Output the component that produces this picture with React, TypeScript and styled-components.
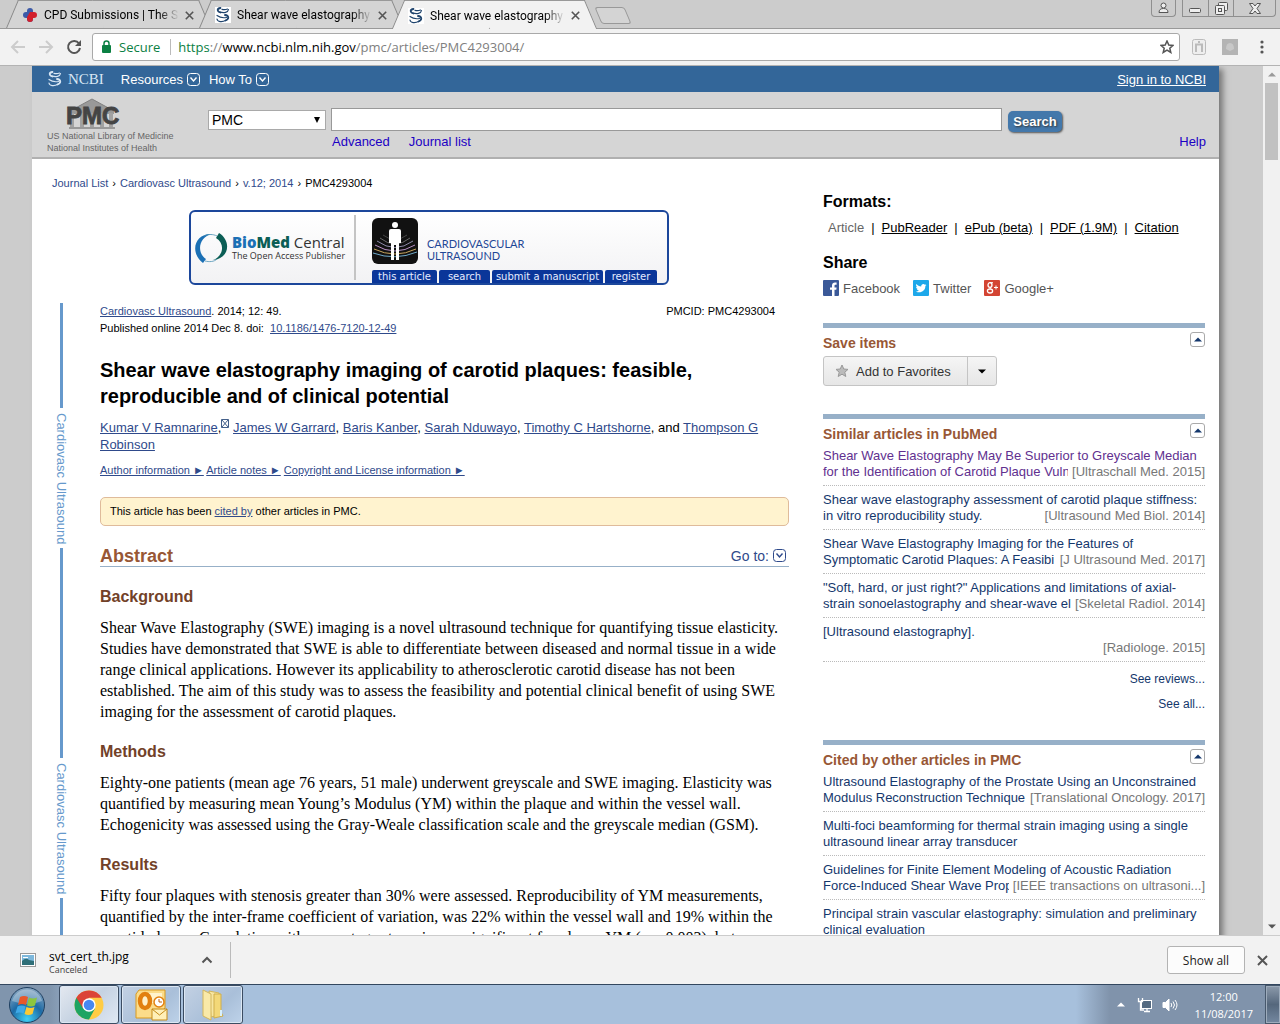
import React from 'react';
import styled, { createGlobalStyle } from 'styled-components';

const GlobalStyle = createGlobalStyle`
    * {
        box-sizing: border-box;
    }
    body {
        margin: 0;
        overflow: hidden;
        font-family: "Liberation Sans", Arial, sans-serif;
        font-size: 13px;
        color: #000;
    }
    h1, h2, h3, p, ul {
        margin: 0;
        padding: 0;
    }
    button, input, select {
        font-family: inherit;
        margin: 0;
        padding: 0;
    }
    svg {
        display: block;
        flex: none;
    }
`;

const uiFont = '"Open Sans", "Noto Sans", sans-serif';

const Screen = styled.div`
    display: flex;
    flex-direction: column;
    height: 100vh;
`;

const PlainButton = styled.button`
    display: flex;
    align-items: center;
    justify-content: center;
    border: 0;
    background: none;
    color: #5a5a5a;
`;

/* ---------- browser frame ---------- */

const TabStrip = styled.div`
    display: flex;
    height: 29px;
    flex: none;
    padding-left: 6px;
    background: #ccc;
    border-bottom: 1px solid #999;
    font-family: Roboto, sans-serif;
`;

const Tab = styled.div<{ $active?: boolean }>`
    position: relative;
    z-index: ${({ $active }) => ($active ? 1 : 0)};
    display: flex;
    align-items: center;
    width: 205px;
    height: ${({ $active }) => ($active ? '29px' : '28px')};
    margin-right: -12px;
    padding: 2px 17px 0 16px;
    gap: 6px;
    font-size: 12px;

    &::before, &::after {
        content: '';
        position: absolute;
        z-index: -1;
        top: 0;
        bottom: 0;
        background: ${({ $active }) => ($active ? '#f2f2f2' : '#d4d4d4')};
        border-top: 1px solid #999;
    }
    &::before {
        left: 6px;
        right: 50%;
        border-left: 1px solid #888;
        transform: skewX(-23deg);
    }
    &::after {
        left: 45%;
        right: 6px;
        border-right: 1px solid #888;
        transform: skewX(23deg);
    }
`;

const TabTitle = styled.span`
    flex: 1;
    line-height: 18px;
    white-space: nowrap;
    mask-image: linear-gradient(to right, #000 85%, transparent);
`;

const NewTab = styled.button`
    width: 30px;
    height: 17px;
    margin: 7px 0 0 13px;
    border: 1px solid #999;
    border-radius: 3px;
    background: #d4d4d4;
    transform: skewX(23deg);
`;

const WindowButtons = styled.div`
    display: flex;
    margin-left: auto;
    padding-right: 4px;
`;

const WindowButton = styled(PlainButton)<{ $width: number; $gap?: boolean }>`
    width: ${({ $width }) => $width}px;
    height: 17px;
    margin-right: ${({ $gap }) => ($gap ? 6 : -1)}px;
    border: 1px solid #8f8f8f;
    border-top: 0;
    border-radius: ${({ $gap }) => ($gap ? '0 0 4px 4px' : '0')};
    &:last-child {
        margin-right: 0;
        border-radius: 0 0 4px 0;
    }
`;

const Toolbar = styled.div`
    display: flex;
    align-items: center;
    flex: none;
    height: 37px;
    padding: 0 10px;
    gap: 16px;
    background: #f2f2f2;
    border-bottom: 1px solid #b3b3b3;
`;

const NavButtons = styled.div`
    display: flex;
    gap: 12px;
`;

const AddressBar = styled.div`
    display: flex;
    align-items: center;
    flex: 1;
    height: 28px;
    margin: 0 -4px 0 -6px;
    padding: 0 5px 0 7px;
    border: 1px solid #a9a9a9;
    border-radius: 3px;
    background: #fff;
    font-family: ${uiFont};
    font-size: 13px;
`;

const Secure = styled.span`
    margin-left: 7px;
    padding-right: 10px;
    border-right: 1px solid #bbb;
    line-height: 16px;
    color: #0b8043;
`;

const Url = styled.span<{ $tone?: string }>`
    color: ${({ $tone }) => $tone || '#808080'};
`;

const UrlText = styled.div`
    flex: 1;
    padding-left: 7px;
`;

/* ---------- page ---------- */

const Viewport = styled.div`
    display: flex;
    flex: 1;
    min-height: 0;
    overflow: hidden;
    background: #ccc;
`;

const Scrollbar = styled.div`
    display: flex;
    flex-direction: column;
    align-items: center;
    width: 17px;
    padding: 6px 0;
    background: #f1f1f1;
`;

const Thumb = styled.div`
    width: 13px;
    height: 77px;
    margin: 6px 0 auto;
    background: #c1c1c1;
`;

const Page = styled.div`
    flex: 1;
    min-width: 0;
    margin: 0 44px 0 32px;
    height: max-content;
    min-height: 100%;
    background: #fff;
    box-shadow: 5px 2px 6px -1px #777;
`;

const NcbiBar = styled.div`
    display: flex;
    align-items: center;
    height: 26px;
    padding: 0 13px 0 15px;
    background: #369;
    color: #fff;
`;

const NcbiLogo = styled.a`
    display: flex;
    align-items: center;
    gap: 5px;
    margin-right: 17px;
    color: #d8e6f4;
    font: 15px "Liberation Serif", "Times New Roman", serif;
    text-decoration: none;
`;

const MenuButton = styled(PlainButton)`
    gap: 4px;
    margin-right: 9px;
    color: #fff;
    font-size: 13px;
`;

const SignIn = styled.a`
    margin-left: auto;
    color: #fff;
`;

const SearchHeader = styled.header`
    display: flex;
    height: 67px;
    padding: 0 13px 0 15px;
    background: #d5d5d5;
    border-bottom: 2px solid #b0b0b0;
`;

const PmcBrand = styled.div`
    width: 161px;
    padding-top: 6px;
    font-size: 9px;
    line-height: 12px;
    color: #666;
    white-space: nowrap;
    svg {
        margin-left: 18px;
    }
`;

const SearchForm = styled.form`
    flex: 1;
    padding-top: 16px;
`;

const SearchRow = styled.div`
    display: flex;
    align-items: center;
    height: 23px;
    padding-right: 144px;
`;

const SelectWrap = styled.div`
    display: grid;
    align-items: center;
    width: 118px;
    margin-right: 5px;
    > * {
        grid-area: 1 / 1;
    }
    svg {
        justify-self: end;
        margin-right: 6px;
        pointer-events: none;
    }
`;

const Select = styled.select`
    width: 100%;
    height: 20px;
    padding-left: 3px;
    appearance: none;
    border: 1px solid #a9a9a9;
    border-radius: 0;
    background: #fff;
    font-size: 14px;
    line-height: 18px;
    color: #000;
`;

const SearchInput = styled.input`
    flex: 1;
    min-width: 0;
    height: 23px;
    border: 1px solid #999;
    background: #fff;
`;

const SearchButton = styled.button`
    width: 54px;
    height: 21px;
    margin: 3px 0 0 6px;
    border: 0;
    border-radius: 5px;
    background: #4378ab;
    box-shadow: 1px 1px 2px #555;
    color: #fff;
    font-size: 13px;
    font-weight: bold;
    text-shadow: 1px 1px 2px #333;
`;

const SearchLinks = styled.div`
    display: flex;
    gap: 19px;
    margin-top: 3px;
    padding-left: 124px;
    line-height: 16px;
    a {
        color: #1b00c4;
        text-decoration: none;
    }
    a:last-child {
        margin-left: auto;
    }
`;

const Columns = styled.div`
    display: grid;
    grid-template-columns: minmax(0, 1fr) 382px;
    gap: 34px;
    padding: 16px 14px 0 20px;
`;

const Breadcrumb = styled.nav`
    display: flex;
    gap: 4px;
    font-size: 11px;
    line-height: 17px;
    a {
        color: #2f4a8b;
        text-decoration: none;
    }
`;

const BannerRow = styled.div`
    display: flex;
    justify-content: center;
    margin: 18px 0;
    padding-left: 17px;
`;

const Banner = styled.div`
    display: grid;
    grid-template: 100% / 165px 1fr;
    width: 480px;
    height: 75px;
    border: 2px solid #1c479b;
    border-radius: 6px;
    background: linear-gradient(#fff, #f2f2f4);
`;

const Publisher = styled.div`
    display: flex;
    align-items: center;
    gap: 4px;
    margin: 3px 0;
    padding-left: 4px;
    border-right: 2px solid #c4c4c4;
    font-family: "Open Sans", sans-serif;
    font-size: 9px;
    line-height: 11px;
    color: #333;
    white-space: nowrap;
`;

const PublisherName = styled.div`
    font-size: 15px;
    line-height: 16px;
    b {
        font-weight: 800;
        color: #1b70b5;
    }
    b + b {
        color: #0b5e55;
    }
`;

const JournalName = styled.div`
    display: flex;
    align-items: flex-end;
    gap: 9px;
    height: 52px;
    padding-left: 16px;
    font-family: Lato, sans-serif;
    font-size: 11px;
    line-height: 12px;
    color: #1f4796;
    div {
        padding-bottom: 2px;
    }
`;

const JournalSide = styled.div`
    display: flex;
    flex-direction: column;
    justify-content: space-between;
`;

const BannerTabs = styled.div`
    display: grid;
    grid-template-columns: 65px 51px 111px 52px;
    gap: 2px;
    margin-left: 16px;
    a {
        border-radius: 2px 2px 0 0;
        background: #0a3699;
        color: #e6ecff;
        font: 10px/13px "DejaVu Sans", sans-serif;
        text-align: center;
        text-decoration: none;
        white-space: nowrap;
    }
`;

const Article = styled.article`
    display: grid;
    grid-template-columns: 48px minmax(0, 1fr);
`;

const Rail = styled.div`
    display: flex;
    flex-direction: column;
    align-items: center;
    width: 19px;
    color: #6699cc;
`;

const RailLine = styled.div<{ $length?: number }>`
    width: 3px;
    height: ${({ $length }) => $length || 300}px;
    background: #6699cc;
`;

const RailText = styled.div`
    height: 140px;
    padding: 5px 0;
    line-height: 17px;
    writing-mode: vertical-rl;
    white-space: nowrap;
`;

const CitationRow = styled.div`
    display: flex;
    justify-content: space-between;
    padding-right: 14px;
    font-size: 11px;
    line-height: 17px;
`;

const TextLink = styled.a`
    color: #2f4a8b;
`;

const Title = styled.h1`
    margin-top: 20px;
    font-size: 20px;
    line-height: 26px;
`;

const Authors = styled.div`
    margin-top: 10px;
    line-height: 17px;
    sup {
        display: inline-block;
        line-height: 0;
        vertical-align: 4px;
    }
`;

const InfoLinks = styled.div`
    margin-top: 9px;
    font-size: 11px;
    line-height: 17px;
`;

const CitedNote = styled.div`
    margin-top: 18px;
    padding: 0 9px;
    border: 1px solid #dfbb9b;
    border-radius: 5px;
    background: #fff3cf;
    font-size: 11px;
    line-height: 27px;
`;

const SectionHead = styled.div`
    display: flex;
    justify-content: space-between;
    align-items: center;
    margin-top: 19px;
    height: 22px;
    border-bottom: 1px solid #97b0c8;
    h2 {
        font-size: 18px;
        line-height: 22px;
        color: #985735;
    }
`;

const GoTo = styled(PlainButton)`
    gap: 4px;
    padding-right: 3px;
    color: #2f4a8b;
    font-size: 14px;
`;

const SubHeading = styled.h3`
    margin: 20px 0 10px;
    font-size: 16px;
    line-height: 20px;
    color: #724128;
`;

const Paragraph = styled.p`
    font-family: "Liberation Serif", "Times New Roman", serif;
    font-size: 16px;
    line-height: 21px;
`;

/* ---------- side column ---------- */

const Side = styled.aside`
    padding-top: 17px;
`;

const SideTitle = styled.h2`
    font-size: 16px;
    line-height: 20px;
`;

const Formats = styled.div`
    display: flex;
    margin: 8px 0 17px;
    padding-left: 5px;
    gap: 7px;
    line-height: 16px;
    a {
        color: #000;
    }
`;

const Muted = styled.span`
    color: #666;
`;

const ShareRow = styled.div`
    display: flex;
    gap: 13px;
    margin: 7px 0 27px;
    a {
        display: flex;
        gap: 4px;
        align-items: center;
        height: 16px;
        color: #555;
        font-size: 13px;
        text-decoration: none;
    }
`;

const Portlet = styled.section`
    margin-bottom: 23px;
    border-top: 5px solid #97b0c8;
`;

const PortletHead = styled.div`
    display: flex;
    justify-content: space-between;
    align-items: flex-start;
    height: 28px;
    padding-top: 4px;
    h3 {
        padding-top: 2px;
        font-size: 14px;
        line-height: 18px;
        color: #985735;
    }
`;

const Toggle = styled(PlainButton)`
    width: 15px;
    height: 15px;
    border: 1px solid #aaa;
    border-radius: 3px;
`;

const Favorites = styled.div`
    display: flex;
    width: max-content;
    height: 30px;
    margin-bottom: 28px;
    border: 1px solid #c4c4c4;
    border-radius: 3px;
    background: linear-gradient(#f5f5f5, #e6e6e6);
`;

const FavoritesButton = styled(PlainButton)`
    gap: 7px;
    padding: 0 16px 0 11px;
    color: #333;
    font-size: 13px;
`;

const FavoritesMore = styled(PlainButton)`
    width: 29px;
    border-left: 1px solid #c4c4c4;
`;

const ArticleList = styled.ul`
    list-style: none;
`;

const ArticleItem = styled.li<{ $visited?: boolean }>`
    display: grid;
    height: 39px;
    margin-bottom: 5px;
    padding-top: 1px;
    border-bottom: 1px dotted #bbb;
    line-height: 16px;
    > * {
        grid-area: 1 / 1;
    }
    a {
        color: ${({ $visited }) => ($visited ? '#61308f' : '#14376c')};
        text-decoration: none;
    }
`;

const Source = styled.span`
    align-self: start;
    justify-self: end;
    margin-top: 16px;
    padding-left: 4px;
    background: #fff;
    color: #777;
`;

const MoreLink = styled.a`
    display: block;
    color: #14376c;
    font-size: 12px;
    line-height: 25px;
    text-align: right;
    text-decoration: none;
`;

/* ---------- downloads and taskbar ---------- */

const DownloadBar = styled.div`
    display: flex;
    align-items: center;
    flex: none;
    height: 49px;
    padding: 0 12px 0 20px;
    background: #f2f2f2;
    border-top: 1px solid #ccc;
    font-family: ${uiFont};
`;

const DownloadItem = styled.div`
    display: flex;
    align-items: center;
    width: 211px;
    height: 36px;
    padding-right: 17px;
    border-right: 1px solid #bbb;
`;

const FileName = styled.div`
    flex: 1;
    margin-left: 13px;
    padding-top: 4px;
    font-size: 12px;
    line-height: 15px;
    small {
        display: block;
        font-size: 9px;
        line-height: 11px;
        color: #444;
    }
`;

const ShowAll = styled.button`
    width: 78px;
    height: 28px;
    margin: 0 12px 0 auto;
    border: 1px solid #b3b3b3;
    border-radius: 3px;
    background: #fcfcfc;
    font-size: 12px;
    color: #222;
`;

const Taskbar = styled.div`
    display: flex;
    flex: none;
    height: 40px;
    border-top: 1px solid #33475f;
    background: linear-gradient(to right, #8095ad 0, #8095ad 50px, #a7c0dc 90px, #a7c0dc calc(100% - 204px), #8093ab calc(100% - 170px));
    font-family: ${uiFont};
    font-size: 11px;
    color: #fff;
`;

const StartButton = styled(PlainButton)`
    width: 54px;
    margin-right: 5px;
`;

const TaskButton = styled(PlainButton)<{ $lit?: boolean }>`
    width: 60px;
    margin-right: 2px;
    border: 1px solid #3b4c62;
    border-radius: 3px;
    box-shadow: inset 0 0 0 1px #dce7f3;
    background: ${({ $lit }) => ($lit ? 'linear-gradient(135deg, #e4e9f0, #c5d2e2 50%, #dfe8f3)' : 'linear-gradient(135deg, #c3d1e3, #a9bfd9 60%, #bed2e9)')};
`;

const Tray = styled.div`
    display: flex;
    align-items: center;
    gap: 9px;
    margin-left: auto;
    padding-right: 12px;
    > svg:first-child {
        margin-right: 3px;
    }
`;

const Clock = styled.div`
    margin-left: 8px;
    text-align: center;
    line-height: 17px;
`;

const ShowDesktop = styled.button`
    width: 15px;
    border: 1px solid #47586c;
    border-right: 0;
    background: linear-gradient(#8c9aab, #55677c 50%, #7488a0);
    box-shadow: inset 0 0 0 1px #9eacbc;
`;

/* ---------- icons ---------- */

const NcbiIcon = ({ dark }: { dark?: boolean }) => (
    <svg width="16" height="16" viewBox="0 0 16 16" fill="none" stroke={dark ? '#20456e' : '#d8e6f4'} strokeLinecap="round">
        {dark && <rect width="16" height="16" fill="#fff" stroke="none" />}
        <path d="M5.500 1C1.500 1.500 2 4.500 5.500 5.500" strokeWidth="1.800" />
        <path d="M5 5.200c4 1 8 .5 8.500-2.700M7 2.300q3 .6 5.500-.3" strokeWidth="1.200" />
        <path d="M10 8c4 .5 4.500 4 .5 5.500" strokeWidth="1.800" />
        <path d="M2 8.500q4 3 9.500 2M2 12c.5 3 5 3.500 9 1.300" strokeWidth="1.200" />
    </svg>
);

const CloseIcon = ({ size = 9 }: { size?: number }) => (
    <svg width={size} height={size} viewBox="0 0 9 9" stroke="#555" strokeWidth="1.600">
        <path d="M.8.8l7.400 7.400M8.200.8L.8 8.200" />
    </svg>
);

const BoxedChevron = () => (
    <svg width="13" height="13" viewBox="0 0 13 13" fill="none" stroke="currentColor">
        <rect x=".5" y=".5" width="12" height="12" rx="3" />
        <path d="M3.500 4.500l3 3.500 3-3.500" strokeWidth="1.400" />
    </svg>
);

const Triangle = ({ up, color = '#000', width = 8 }: { up?: boolean; color?: string; width?: number }) => (
    <svg width={width} height="5" viewBox="0 0 8 5" fill={color} preserveAspectRatio="none">
        <path d={up ? 'M0 4.500L4 .5l4 4z' : 'M0 .5h8l-4 4z'} />
    </svg>
);

const PmcLogo = () => (
    <svg width="56" height="32" viewBox="0 0 56 32">
        <path d="M5 13L27 1l22 12v3H5z" fill="#999" />
        <path d="M5 13L27 1l22 12" fill="none" stroke="#808080" />
        <path d="M7 15v15M17 15v15M27 15v15M37 15v15M46 15v15" stroke="#a2a2a2" strokeWidth="4" />
        <path d="M4 30h46" stroke="#999" strokeWidth="2" />
        <text x="1" y="26" fontFamily="Liberation Sans, Arial, sans-serif" fontSize="24" fontWeight="bold" fill="#444" stroke="#444" strokeWidth=".8">PMC</text>
    </svg>
);

const BodyIcon = () => (
    <svg width="46" height="46" viewBox="0 0 46 46" fill="none">
        <rect width="46" height="46" rx="6" fill="#111" />
        <g strokeWidth="1">
            <path d="M11 17q12 9 24 0" stroke="#444" />
            <path d="M8 20q15 12 30 0" stroke="#666" />
            <path d="M5 23q18 13 36 0" stroke="#8d8aa8" />
            <path d="M3 27q20 12 40 0" stroke="#b78fc4" />
            <path d="M2 31q21 10 42 0" stroke="#c9a55c" />
            <path d="M1 35q22 8 44-1" stroke="#6fa9c9" />
        </g>
        <circle cx="23" cy="7" r="3" fill="#fff" />
        <path d="M19 11h8q2 0 2 2v12h-2v17h-3V27h-2v15h-3V25h-2V13q0-2 2-2z" fill="#fff" />
    </svg>
);

const SwirlIcon = () => (
    <svg width="33" height="32" viewBox="0 0 33 32">
        <path d="M17 2C0 1-6 20 8 31l3-4C1 20 4 5 17 2z" fill="#1b70b5" />
        <path d="M24 1c13 8 10 26-6 27 11-4 12-17 3-22z" fill="#0b5e55" />
        <path d="M9 4c4-2 9-2 13 0M10 29c4 1 9 1 12-2" stroke="#4d93b5" fill="none" strokeWidth=".8" />
    </svg>
);

const FacebookIcon = () => (
    <svg width="16" height="16" viewBox="0 0 16 16">
        <rect width="16" height="16" rx="1" fill="#3b5998" />
        <path d="M9 16V9.800H7V7.400h2V5.500C9 3.500 10.200 2.500 12 2.500h1.600v2.200h-1c-.9 0-1.100.4-1.100 1.100v1.600h2.100l-.3 2.400h-1.800V16z" fill="#fff" />
    </svg>
);

const TwitterIcon = () => (
    <svg width="16" height="16" viewBox="0 0 16 16">
        <rect width="16" height="16" rx="1" fill="#1da8ea" />
        <path d="M13.500 4.900l-1.100.4.800-1.100-1.300.5C10.500 3.400 8 4.300 8.200 6.500 6.200 6.400 4.600 5.500 3.400 4.100c-.7 1.200-.2 2.300.7 2.900l-1-.2c0 1.100.7 1.900 1.700 2.200h-.9c.2.800 1 1.400 2 1.500-.9.700-2 1-3.100.9 4.300 2.400 9.500.1 9.600-5.300z" fill="#fff" />
    </svg>
);

const GoogleIcon = () => (
    <svg width="16" height="16" viewBox="0 0 16 16" fill="none" stroke="#fff" strokeWidth="1.300">
        <rect width="16" height="16" rx="1" fill="#d34433" stroke="none" />
        <ellipse cx="6" cy="5" rx="2" ry="2.300" />
        <ellipse cx="6" cy="11" rx="2.600" ry="2" />
        <path d="M6 2.700h3M7 7.200q-2 1 0 2M10 7.500h4M12 5.500v4" strokeWidth="1" />
    </svg>
);

const StarIcon = ({ filled }: { filled?: boolean }) => (
    <svg width="14" height="14" viewBox="0 0 14 14" fill={filled ? '#bbb' : 'none'} stroke={filled ? '#999' : '#555'} strokeWidth={filled ? 1 : 1.5}>
        <path d="M7 1l1.800 4 4.200.4-3.200 2.800 1 4.300L7 10.200l-3.800 2.300 1-4.300L1 5.400 5.200 5z" />
    </svg>
);

const WindowsOrb = () => (
    <svg width="38" height="38" viewBox="0 0 38 38">
        <defs>
            <radialGradient id="orb" cx=".5" cy=".9" r=".9">
                <stop offset="0" stopColor="#3fd0f5" />
                <stop offset=".5" stopColor="#1d6ba6" />
                <stop offset="1" stopColor="#8ea9c2" />
            </radialGradient>
        </defs>
        <circle cx="19" cy="19" r="17.500" fill="url(#orb)" stroke="#1f3f60" />
        <path d="M4 15a15.500 15.500 0 0130 0q-14 6-30 0z" fill="#fff" opacity=".3" />
        <path d="M12 11q4-2 8 0l-2 8q-4-2-8 0z" fill="#e8582a" />
        <path d="M21 11.500q4 2 8 0l-2 8q-4 2-8 0z" fill="#8cc63f" />
        <path d="M9.500 20.500q4-2 8 0l-2 7q-4-2-8 0z" fill="#3fa9e8" />
        <path d="M18.500 21q4 2 8 0l-2 7q-4 2-8 0z" fill="#fcc934" />
    </svg>
);

const ChromeIcon = () => (
    <svg width="30" height="30" viewBox="0 0 30 30">
        <circle cx="15" cy="15" r="14.500" fill="#fc4" />
        <path d="M15 15L2.400 7.800A14.500 14.500 0 0015 29.500l6-11z" fill="#1da462" />
        <path d="M2.400 7.800a14.500 14.500 0 0125.200 0H15l-6 10.500z" fill="#db4437" />
        <circle cx="15" cy="15" r="6.700" fill="#fff" />
        <circle cx="15" cy="15" r="5.300" fill="#4688f1" />
    </svg>
);

const OutlookIcon = () => (
    <svg width="34" height="34" viewBox="0 0 34 34">
        <path d="M5 2h26v18L20 30H2V6z" fill="#fbdc8a" stroke="#d99a1e" />
        <rect x="15" y="5" width="13" height="10" fill="#fff3cc" />
        <ellipse cx="11" cy="13" rx="5" ry="7" fill="#fff0c8" stroke="#e2800f" strokeWidth="4.500" />
        <circle cx="25" cy="14" r="5" fill="#fff" stroke="#e2800f" strokeWidth="1.500" />
        <path d="M25 11v3h3" fill="none" stroke="#c0600a" />
        <path d="M18 21h15v11H18z" fill="#fff0b8" stroke="#c48a18" />
        <path d="M18 21l7.500 6 7.500-6" fill="none" stroke="#c48a18" />
    </svg>
);

const FolderIcon = () => (
    <svg width="26" height="32" viewBox="0 0 26 32">
        <path d="M9 2l10 2v22l-8 2z" fill="#f7e6a0" stroke="#d4b65a" />
        <path d="M14 5h7v18l2 4-9 2z" fill="#f3d878" stroke="#cfae4c" />
        <path d="M3 1l8 4v26l-8-4z" fill="#f9e9a8" stroke="#d4b65a" />
        <path d="M20 21h2v6h-2z" fill="#d9f0fb" />
    </svg>
);

const similar = [
    { title: 'Shear Wave Elastography May Be Superior to Greyscale Median for the Identification of Carotid Plaque Vuln', source: '[Ultraschall Med. 2015]', visited: true },
    { title: 'Shear wave elastography assessment of carotid plaque stiffness: in vitro reproducibility study.', source: '[Ultrasound Med Biol. 2014]' },
    { title: 'Shear Wave Elastography Imaging for the Features of Symptomatic Carotid Plaques: A Feasibi', source: '[J Ultrasound Med. 2017]' },
    { title: '"Soft, hard, or just right?" Applications and limitations of axial-strain sonoelastography and shear-wave el', source: '[Skeletal Radiol. 2014]' },
    { title: '[Ultrasound elastography].', source: '[Radiologe. 2015]' },
];

const citedBy = [
    { title: 'Ultrasound Elastography of the Prostate Using an Unconstrained Modulus Reconstruction Technique', source: '[Translational Oncology. 2017]' },
    { title: 'Multi-foci beamforming for thermal strain imaging using a single ultrasound linear array transducer' },
    { title: 'Guidelines for Finite Element Modeling of Acoustic Radiation Force-Induced Shear Wave Prop', source: '[IEEE transactions on ultrasoni...]' },
    { title: 'Principal strain vascular elastography: simulation and preliminary clinical evaluation' },
];

const authors = ['James W Garrard', 'Baris Kanber', 'Sarah Nduwayo', 'Timothy C Hartshorne'];

const SidePortlet = ({ title, children }: any) => (
    <Portlet>
        <PortletHead>
            <h3>{title}</h3>
            <Toggle aria-label={`Collapse ${title}`}><Triangle up color="#14376c" /></Toggle>
        </PortletHead>
        {children}
    </Portlet>
);

const Articles = ({ items }: any) => (
    <ArticleList>
        {items.map((item: any) => (
            <ArticleItem key={item.title} $visited={item.visited}>
                <a href="#article">{item.title}</a>
                {item.source && <Source>{item.source}</Source>}
            </ArticleItem>
        ))}
    </ArticleList>
);

const BrowserTop = () => (
    <>
        <TabStrip>
            <Tab>
                <svg width="16" height="16" viewBox="0 0 16 16">
                    <path d="M5 4a3 3 0 016 0v8a3 3 0 01-6 0z" fill="#3c5aa8" />
                    <path d="M4 5h4v6H4a3 3 0 010-6z" fill="#3c5aa8" />
                    <path d="M8 5h4a3 3 0 010 6h-1v1a3 3 0 01-6 0v-2z" fill="#d2202c" />
                </svg>
                <TabTitle>CPD Submissions | The S</TabTitle>
                <PlainButton aria-label="Close tab"><CloseIcon /></PlainButton>
            </Tab>
            <Tab>
                <NcbiIcon dark />
                <TabTitle>Shear wave elastography</TabTitle>
                <PlainButton aria-label="Close tab"><CloseIcon /></PlainButton>
            </Tab>
            <Tab $active>
                <NcbiIcon dark />
                <TabTitle>Shear wave elastography</TabTitle>
                <PlainButton aria-label="Close tab"><CloseIcon /></PlainButton>
            </Tab>
            <NewTab aria-label="New tab" />
            <WindowButtons>
                <WindowButton $width={25} $gap aria-label="Profile">
                    <svg width="11" height="12" viewBox="0 0 11 12" fill="#eee" stroke="#555"><circle cx="5.500" cy="3.500" r="2.500" /><path d="M1 10.500q0-4 4.500-4t4.500 4z" /></svg>
                </WindowButton>
                <WindowButton $width={27} aria-label="Minimize">
                    <svg width="13" height="12" viewBox="0 0 13 12"><rect x=".5" y="6.500" width="11" height="4" rx="1" fill="#eee" stroke="#555" /></svg>
                </WindowButton>
                <WindowButton $width={26} aria-label="Restore">
                    <svg width="13" height="13" viewBox="0 0 13 13" fill="#eee" stroke="#555"><rect x="3.500" y=".5" width="9" height="8" rx="1" /><rect x=".5" y="3.500" width="9" height="9" rx="1" /><rect x="3.500" y="6.500" width="3" height="3" /></svg>
                </WindowButton>
                <WindowButton $width={43} aria-label="Close">
                    <svg width="12" height="11" viewBox="0 0 12 11" fill="#eee" stroke="#555"><path d="M.5.5h3.500L6 3 8 .5h3.500l-3.500 5 3.500 5H8L6 8l-2 2.500H.5l3.500-5z" /></svg>
                </WindowButton>
            </WindowButtons>
        </TabStrip>
        <Toolbar>
            <NavButtons>
                <PlainButton aria-label="Back">
                    <svg width="16" height="16" viewBox="0 0 16 16" fill="none" stroke="#ccc" strokeWidth="2"><path d="M15 8H2M8 2L2 8l6 6" /></svg>
                </PlainButton>
                <PlainButton aria-label="Forward">
                    <svg width="16" height="16" viewBox="0 0 16 16" fill="none" stroke="#ccc" strokeWidth="2"><path d="M1 8h13M8 2l6 6-6 6" /></svg>
                </PlainButton>
                <PlainButton aria-label="Reload">
                    <svg width="16" height="16" viewBox="0 0 16 16" fill="none" stroke="#555" strokeWidth="2"><path d="M13 4.500A6 6 0 1014 9" /><path d="M15 1v6H9z" fill="#555" stroke="none" /></svg>
                </PlainButton>
            </NavButtons>
            <AddressBar>
                <svg width="12" height="14" viewBox="0 0 12 14"><rect x="2" y="5" width="9" height="8" rx="1" fill="#0b8043" /><path d="M4 6V3.500a2.500 2.500 0 015 0V6" fill="none" stroke="#0b8043" strokeWidth="1.500" /></svg>
                <Secure>Secure</Secure>
                <UrlText>
                    <Url $tone="#0b8043">https</Url><Url>://</Url><Url $tone="#000">www.ncbi.nlm.nih.gov</Url><Url>/pmc/articles/PMC4293004/</Url>
                </UrlText>
                <PlainButton aria-label="Bookmark"><StarIcon /></PlainButton>
            </AddressBar>
            <PlainButton aria-label="Extension">
                <svg width="14" height="16" viewBox="0 0 14 16" fill="none" stroke="#bbb"><rect x=".5" y=".5" width="13" height="15" rx="2" fill="#eee" /><path d="M4 13V5.500h6V13M7 2v2" strokeWidth="2" /></svg>
            </PlainButton>
            <PlainButton aria-label="Extension">
                <svg width="16" height="16" viewBox="0 0 16 16"><rect width="16" height="16" fill="#b4b4b4" /><path d="M4 10q0-6 4-6t4 6l-4 2z" fill="#c8c8c8" /></svg>
            </PlainButton>
            <PlainButton aria-label="Menu">
                <svg width="16" height="14" viewBox="0 0 16 14" fill="#555"><circle cx="8" cy="2" r="1.600" /><circle cx="8" cy="7" r="1.600" /><circle cx="8" cy="12" r="1.600" /></svg>
            </PlainButton>
        </Toolbar>
    </>
);

const PageHeader = () => (
    <>
        <NcbiBar>
            <NcbiLogo href="#ncbi"><NcbiIcon />NCBI</NcbiLogo>
            <MenuButton>Resources <BoxedChevron /></MenuButton>
            <MenuButton>How To <BoxedChevron /></MenuButton>
            <SignIn href="#signin">Sign in to NCBI</SignIn>
        </NcbiBar>
        <SearchHeader>
            <PmcBrand>
                <PmcLogo />
                US National Library of Medicine<br />National Institutes of Health
            </PmcBrand>
            <SearchForm>
                <SearchRow>
                    <SelectWrap>
                        <Select aria-label="Database"><option>PMC</option></Select>
                        <svg width="6" height="6" viewBox="0 0 6 6"><path d="M0 0h6L3 6z" /></svg>
                    </SelectWrap>
                    <SearchInput aria-label="Search term" />
                    <SearchButton type="button">Search</SearchButton>
                </SearchRow>
                <SearchLinks>
                    <a href="#advanced">Advanced</a>
                    <a href="#journals">Journal list</a>
                    <a href="#help">Help</a>
                </SearchLinks>
            </SearchForm>
        </SearchHeader>
    </>
);

const MainColumn = () => (
    <main>
        <Breadcrumb>
            <a href="#list">Journal List</a>&rsaquo;<a href="#cu">Cardiovasc Ultrasound</a>&rsaquo;<a href="#v12">v.12; 2014</a>&rsaquo;<span>PMC4293004</span>
        </Breadcrumb>
        <BannerRow>
            <Banner>
                <Publisher>
                    <SwirlIcon />
                    <div>
                        <PublisherName><b>Bio</b><b>Med</b> Central</PublisherName>
                        The Open Access Publisher
                    </div>
                </Publisher>
                <JournalSide>
                    <JournalName>
                        <BodyIcon />
                        <div>CARDIOVASCULAR<br />ULTRASOUND</div>
                    </JournalName>
                    <BannerTabs>
                        <a href="#this">this article</a>
                        <a href="#search">search</a>
                        <a href="#submit">submit a manuscript</a>
                        <a href="#register">register</a>
                    </BannerTabs>
                </JournalSide>
            </Banner>
        </BannerRow>
        <Article>
            <Rail>
                <RailLine $length={105} />
                <RailText>Cardiovasc Ultrasound</RailText>
                <RailLine $length={210} />
                <RailText>Cardiovasc Ultrasound</RailText>
                <RailLine />
            </Rail>
            <div>
                <CitationRow>
                    <span><TextLink href="#cu">Cardiovasc Ultrasound</TextLink>. 2014; 12: 49.</span>
                    <span>PMCID: PMC4293004</span>
                </CitationRow>
                <CitationRow>
                    <span>Published online 2014 Dec 8. doi:&nbsp; <TextLink href="#doi">10.1186/1476-7120-12-49</TextLink></span>
                </CitationRow>
                <Title>Shear wave elastography imaging of carotid plaques: feasible, reproducible and of clinical potential</Title>
                <Authors>
                    <TextLink href="#a">Kumar V Ramnarine</TextLink>,<sup>
                        <svg width="8" height="9" viewBox="0 0 8 9" fill="none" stroke="#14376c"><path d="M.5.5h7v8h-7zM1 1l6 7M7 1L1 8" strokeWidth=".8" /></svg>
                    </sup>{' '}
                    {authors.map((name) => <React.Fragment key={name}><TextLink href="#a">{name}</TextLink>, </React.Fragment>)}
                    and <TextLink href="#a">Thompson G Robinson</TextLink>
                </Authors>
                <InfoLinks>
                    <TextLink href="#info">Author information ►</TextLink> <TextLink href="#notes">Article notes ►</TextLink> <TextLink href="#license">Copyright and License information ►</TextLink>
                </InfoLinks>
                <CitedNote>This article has been <TextLink href="#cited">cited by</TextLink> other articles in PMC.</CitedNote>
                <SectionHead>
                    <h2>Abstract</h2>
                    <GoTo>Go to: <BoxedChevron /></GoTo>
                </SectionHead>
                <SubHeading>Background</SubHeading>
                <Paragraph>Shear Wave Elastography (SWE) imaging is a novel ultrasound technique for quantifying tissue elasticity. Studies have demonstrated that SWE is able to differentiate between diseased and normal tissue in a wide range clinical applications. However its applicability to atherosclerotic carotid disease has not been established. The aim of this study was to assess the feasibility and potential clinical benefit of using SWE imaging for the assessment of carotid plaques.</Paragraph>
                <SubHeading>Methods</SubHeading>
                <Paragraph>Eighty-one patients (mean age 76 years, 51 male) underwent greyscale and SWE imaging. Elasticity was quantified by measuring mean Young’s Modulus (YM) within the plaque and within the vessel wall. Echogenicity was assessed using the Gray-Weale classification scale and the greyscale median (GSM).</Paragraph>
                <SubHeading>Results</SubHeading>
                <Paragraph>Fifty four plaques with stenosis greater than 30% were assessed. Reproducibility of YM measurements, quantified by the inter-frame coefficient of variation, was 22% within the vessel wall and 19% within the carotid plaque. Correlation with percentage stenosis was significant for plaque YM (p = 0.003), but</Paragraph>
            </div>
        </Article>
    </main>
);

const SideColumn = () => (
    <Side>
        <SideTitle>Formats:</SideTitle>
        <Formats>
            <Muted>Article</Muted>|<a href="#reader">PubReader</a>|<a href="#epub">ePub (beta)</a>|<a href="#pdf">PDF (1.9M)</a>|<a href="#citation">Citation</a>
        </Formats>
        <SideTitle>Share</SideTitle>
        <ShareRow>
            <a href="#fb"><FacebookIcon />Facebook</a>
            <a href="#tw"><TwitterIcon />Twitter</a>
            <a href="#gp"><GoogleIcon />Google+</a>
        </ShareRow>
        <SidePortlet title="Save items">
            <Favorites>
                <FavoritesButton><StarIcon filled />Add to Favorites</FavoritesButton>
                <FavoritesMore aria-label="More options"><Triangle /></FavoritesMore>
            </Favorites>
        </SidePortlet>
        <SidePortlet title="Similar articles in PubMed">
            <Articles items={similar} />
            <MoreLink href="#reviews">See reviews...</MoreLink>
            <MoreLink href="#all">See all...</MoreLink>
        </SidePortlet>
        <SidePortlet title="Cited by other articles in PMC">
            <Articles items={citedBy} />
        </SidePortlet>
    </Side>
);

const BottomBars = () => (
    <>
        <DownloadBar>
            <DownloadItem>
                <svg width="16" height="14" viewBox="0 0 16 14"><rect x=".5" y=".5" width="15" height="13" fill="#fff" stroke="#999" /><path d="M2 2h12v10H2z" fill="#7db8dc" /><path d="M2 8q4-4 7-1l5 1v4H2z" fill="#2f6f78" /><path d="M3 4h5v1H3z" fill="#fff" /></svg>
                <FileName>svt_cert_th.jpg<small>Canceled</small></FileName>
                <PlainButton aria-label="Download options">
                    <svg width="12" height="8" viewBox="0 0 12 8" fill="none" stroke="#555" strokeWidth="2"><path d="M1.500 6.500L6 2l4.500 4.500" /></svg>
                </PlainButton>
            </DownloadItem>
            <ShowAll>Show all</ShowAll>
            <PlainButton aria-label="Close downloads"><CloseIcon size={11} /></PlainButton>
        </DownloadBar>
        <Taskbar>
            <StartButton aria-label="Start"><WindowsOrb /></StartButton>
            <TaskButton $lit aria-label="Chrome"><ChromeIcon /></TaskButton>
            <TaskButton aria-label="Outlook"><OutlookIcon /></TaskButton>
            <TaskButton aria-label="Explorer"><FolderIcon /></TaskButton>
            <Tray>
                <Triangle up color="#fff" />
                <svg width="16" height="16" viewBox="0 0 16 16" fill="none" stroke="#fff"><rect x="4.500" y="3.500" width="10" height="8" fill="#556b82" /><path d="M7 14.500h6M10 12v2M1.500 1v3.500h4V1M3.500 5v8H7" strokeWidth="1.300" /></svg>
                <svg width="16" height="16" viewBox="0 0 16 16" fill="none" stroke="#fff"><path d="M1 5.500h2.500L7 2v12l-3.500-3.500H1z" fill="#fff" /><path d="M9 6q1.500 2 0 4M11 4.500q3 3.500 0 7M13 3q4 5 0 10" /></svg>
                <Clock>12:00<br />11/08/2017</Clock>
            </Tray>
            <ShowDesktop aria-label="Show desktop" />
        </Taskbar>
    </>
);

const App = () => (
    <>
        <GlobalStyle />
        <Screen>
            <BrowserTop />
            <Viewport>
                <Page>
                    <PageHeader />
                    <Columns>
                        <MainColumn />
                        <SideColumn />
                    </Columns>
                </Page>
                <Scrollbar>
                    <Triangle up color="#999" />
                    <Thumb />
                    <Triangle color="#555" />
                </Scrollbar>
            </Viewport>
            <BottomBars />
        </Screen>
    </>
);

export default App;
